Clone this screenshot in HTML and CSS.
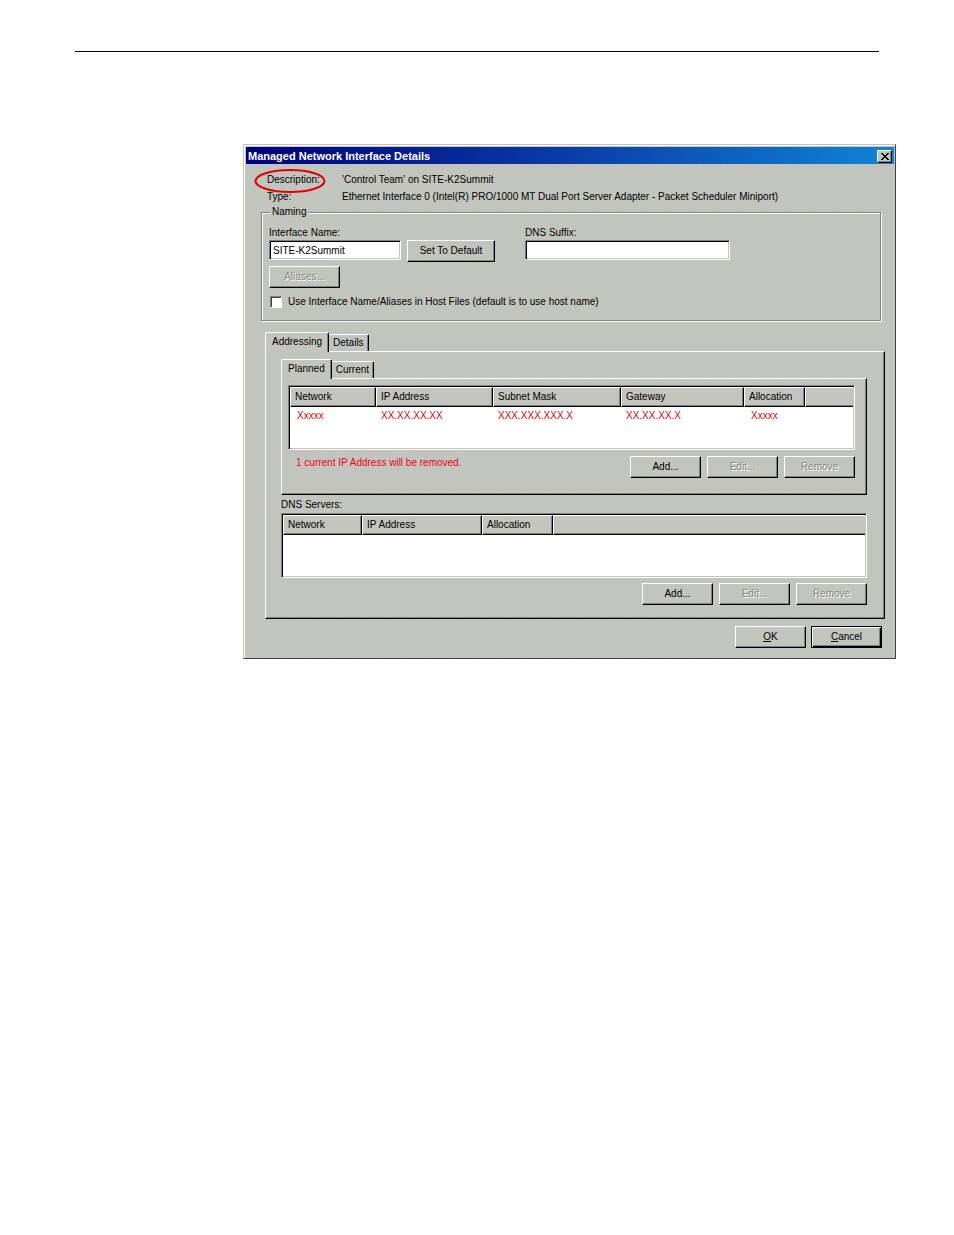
FILE: index.html
```html
<!DOCTYPE html>
<html lang="en">

<head>
    <meta charset="UTF-8">
    <meta name="viewport" content="width=device-width, initial-scale=1.0">
    <link rel="stylesheet" href="styles.css">
    <title>Managed Network Interface Details</title>
</head>

<body>

    <hr class="page-rule">

    <div class="dialog">
        <div class="title-bar">
            <h1>Managed Network Interface Details</h1>
            <button class="close" aria-label="Close">
                <svg width="8" height="7" viewBox="0 0 8 7" shape-rendering="crispEdges">
                    <path d="M0 0h2v1h1v1h2v-1h1v-1h2v1h-1v1h-1v1h-1v1h1v1h1v1h1v1h-2v-1h-1v-1h-2v1h-1v1h-2v-1h1v-1h1v-1h1v-1h-1v-1h-1v-1h-1z" fill="#000"/>
                </svg>
            </button>
        </div>

        <div class="dialog-body">
            <dl class="info">
                <dt>Description:
                    <svg class="circle" width="72" height="26" viewBox="0 0 72 26">
                        <ellipse cx="36" cy="13" rx="34.5" ry="11" fill="none" stroke="#e00000" stroke-width="2"/>
                    </svg>
                </dt>
                <dd>'Control Team' on SITE-K2Summit</dd>
                <dt>Type:</dt>
                <dd>Ethernet Interface 0 (Intel(R) PRO/1000 MT Dual Port Server Adapter - Packet Scheduler Miniport)</dd>
            </dl>

            <fieldset class="naming">
                <legend>Naming</legend>
                <div class="naming-row">
                    <div class="name-field">
                        <label for="interfaceName">Interface Name:</label>
                        <div class="name-inputs">
                            <input type="text" id="interfaceName" value="SITE-K2Summit">
                            <button class="btn btn-wide">Set To Default</button>
                        </div>
                    </div>
                    <div class="suffix-field">
                        <label for="dnsSuffix">DNS Suffix:</label>
                        <input type="text" id="dnsSuffix">
                    </div>
                </div>
                <button class="btn" disabled>Aliases...</button>
                <div class="check-row">
                    <input type="checkbox" id="useAliases">
                    <label for="useAliases">Use Interface Name/Aliases in Host Files (default is to use host name)</label>
                </div>
            </fieldset>

            <div class="tabs">
                <button class="tab active">Addressing</button>
                <button class="tab">Details</button>
            </div>
            <div class="panel panel-outer">
                <div class="tabs">
                    <button class="tab active">Planned</button>
                    <button class="tab">Current</button>
                </div>
                <div class="panel panel-inner">
                    <div class="list">
                        <table>
                            <colgroup>
                                <col class="col-86"><col class="col-117"><col class="col-128"><col class="col-123"><col class="col-61"><col>
                            </colgroup>
                            <thead>
                                <tr><th>Network</th><th>IP Address</th><th>Subnet Mask</th><th>Gateway</th><th>Allocation</th><th></th></tr>
                            </thead>
                            <tbody>
                                <tr><td class="name">Xxxxx</td><td>XX.XX.XX.XX</td><td>XXX.XXX.XXX.X</td><td>XX.XX.XX.X</td><td class="name">Xxxxx</td><td></td></tr>
                            </tbody>
                        </table>
                    </div>
                    <div class="list-footer">
                        <p class="warning">1 current IP Address will be removed.</p>
                        <div class="buttons">
                            <button class="btn">Add...</button>
                            <button class="btn" disabled>Edit...</button>
                            <button class="btn" disabled>Remove</button>
                        </div>
                    </div>
                </div>

                <h2>DNS Servers:</h2>
                <div class="list list-dns">
                    <table>
                        <colgroup>
                            <col class="col-79"><col class="col-120"><col class="col-71"><col>
                        </colgroup>
                        <thead>
                            <tr><th>Network</th><th>IP Address</th><th>Allocation</th><th></th></tr>
                        </thead>
                    </table>
                </div>
                <div class="buttons">
                    <button class="btn">Add...</button>
                    <button class="btn" disabled>Edit...</button>
                    <button class="btn" disabled>Remove</button>
                </div>
            </div>

            <div class="dialog-actions">
                <button class="btn"><u>O</u>K</button>
                <button class="btn btn-default"><u>C</u>ancel</button>
            </div>
        </div>
    </div>

</body>

</html>
```

FILE: styles.css
```css
* {
    box-sizing: border-box;
}

body {
    margin: 0;
    padding: 51px 58px 40px 75px;
    background-color: #fff;
    color: #000;
    font-family: "Liberation Sans", Arial, sans-serif;
    font-size: 10px;
    line-height: 12px;
}

.page-rule {
    margin: 0 17px 92px 0;
    border: 0;
    border-top: 1px solid #000;
}

.dialog {
    margin-left: 168px;
    padding: 1px;
    border: 1px solid #c3c3bc;
    border-right-color: #404040;
    border-bottom-color: #404040;
    background-color: #c4c4be;
    /* dithered grey */
    background-image:
        radial-gradient(circle at 0 0, #a4c8c2 1px, transparent 1px),
        radial-gradient(circle at 0 0, #a4c8c2 1px, transparent 1px);
    background-size: 6px 8px;
    background-position: 0 0, 3px 4px;
    box-shadow: inset 1px 1px #fff;
}

.title-bar {
    display: flex;
    justify-content: space-between;
    align-items: center;
    height: 17px;
    margin: 1px 0 0 1px;
    padding: 1px 2px 0;
    background: linear-gradient(to right, #00007b, #0a3ea6 50%, #1084d6);
    color: #fff;
}

h1 {
    margin: 0;
    font-size: 11px;
    line-height: 16px;
}

button {
    padding: 0;
    border: 1px solid;
    border-color: #fff #000 #000 #fff;
    border-radius: 0;
    background: transparent;
    box-shadow: inset -1px -1px #808080;
    color: #000;
    font: inherit;
}

.close {
    display: flex;
    justify-content: center;
    align-items: center;
    width: 15px;
    height: 13px;
    background-color: #c4c4be;
}

.dialog-body {
    padding: 10px 9px 9px 16px;
}

.info {
    display: grid;
    grid-template-columns: 75px 1fr;
    row-gap: 5px;
    margin: 0 0 3px 6px;
}

.info dt {
    position: relative;
}

.info dd {
    margin: 0;
}

.circle {
    position: absolute;
    left: -13px;
    top: -6px;
}

.naming {
    margin: 0 4px 0 0;
    padding: 9px 8px 12px 7px;
    border: 1px solid #808080;
    box-shadow: 1px 1px #fff, inset 1px 1px #fff;
}

.naming legend {
    margin-left: 1px;
    padding: 0 2px;
    background-color: #c4c4be;
}

.naming-row {
    display: flex;
    gap: 30px;
    margin-bottom: 4px;
}

.name-inputs {
    display: flex;
    gap: 6px;
}

.naming-row label {
    display: block;
    margin-bottom: 1px;
}

input[type="text"] {
    display: block;
    width: 132px;
    height: 20px;
    padding: 0 3px;
    border: 1px solid;
    border-color: #808080 #fff #fff #808080;
    border-radius: 0;
    background-color: #fff;
    box-shadow: inset 1px 1px #000, inset -1px -1px #c4c4be;
    font: inherit;
}

.suffix-field input[type="text"] {
    width: 205px;
}

.check-row {
    display: flex;
    align-items: center;
    gap: 6px;
    margin-top: 8px;
}

input[type="checkbox"] {
    appearance: none;
    width: 12px;
    height: 12px;
    margin: 0 0 0 1px;
    border: 1px solid;
    border-color: #808080 #fff #fff #808080;
    background-color: #fff;
    box-shadow: inset 1px 1px #404040;
}

.btn {
    width: 71px;
    height: 22px;
}

.btn-wide {
    width: 88px;
}

.btn:disabled {
    color: #87877f;
    text-shadow: 1px 1px #fff;
}

.btn-default {
    border-color: #000;
    box-shadow: inset 1px 1px #fff, inset -1px -1px #000, inset -2px -2px #808080;
}

.tabs {
    display: flex;
    align-items: flex-end;
}

.naming + .tabs {
    margin: 11px 0 0 4px;
}

.tab {
    height: 17px;
    padding: 0 4px;
    border-width: 1px 1px 0 0;
    border-top-right-radius: 2px;
    box-shadow: inset -1px 0 #808080;
}

/* the active tab covers the top line of its panel */
.tab.active {
    z-index: 1;
    height: 20px;
    margin-bottom: -1px;
    padding: 0 6px 2px;
    border-left-width: 1px;
    border-top-left-radius: 2px;
    background-color: #c4c4be;
}

.panel {
    border: 1px solid;
    border-color: #fff #000 #000 #fff;
    box-shadow: inset -1px -1px #808080;
}

.panel-outer {
    margin-left: 4px;
    padding: 7px 17px 13px 15px;
}

.panel-inner {
    padding: 6px 11px 16px 6px;
}

.list {
    height: 65px;
    padding: 1px;
    border: 1px solid;
    border-color: #808080 #fff #fff #808080;
    background-color: #fff;
    box-shadow: inset 1px 1px #000, inset -1px -1px #c4c4be;
}

table {
    width: 100%;
    border-collapse: separate;
    border-spacing: 0;
    table-layout: fixed;
}

th {
    height: 20px;
    padding: 0 4px;
    border: 1px solid;
    border-color: #fff #000 #000 #fff;
    background-color: #c4c4be;
    box-shadow: inset -1px -1px #808080;
    font-weight: normal;
    text-align: left;
}

th:last-child {
    border-right: 0;
    box-shadow: inset 0 -1px #808080;
}

td {
    height: 18px;
    padding: 0 5px;
    color: #e00000;
}

td.name {
    padding-left: 7px;
}

.col-61 { width: 61px; }
.col-71 { width: 71px; }
.col-79 { width: 79px; }
.col-86 { width: 86px; }
.col-117 { width: 117px; }
.col-120 { width: 120px; }
.col-123 { width: 123px; }
.col-128 { width: 128px; }

.list-footer {
    display: flex;
    justify-content: space-between;
    margin-top: 6px;
}

.warning {
    margin: 1px 0 0 8px;
    color: #f00020;
}

.buttons {
    display: flex;
    justify-content: flex-end;
    gap: 6px;
}

h2 {
    margin: 4px 0 2px;
    font-size: 10px;
    font-weight: normal;
}

.list-dns + .buttons {
    margin-top: 5px;
}

.dialog-actions {
    display: flex;
    justify-content: flex-end;
    gap: 5px;
    margin: 7px 3px 0 0;
}
```
